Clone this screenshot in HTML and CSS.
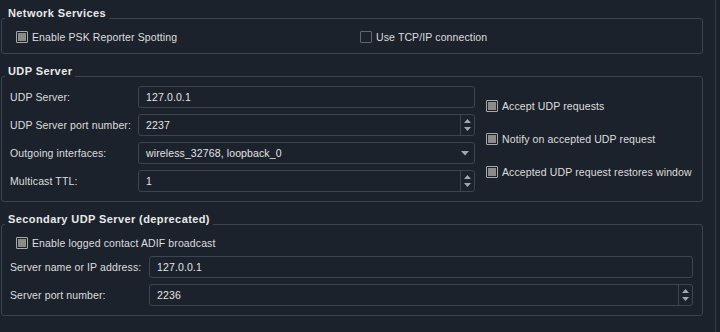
FILE: index.html
```html
<!DOCTYPE html>
<html lang="en">
<head>
    <meta charset="UTF-8">
    <title>Reporting settings</title>
    <link rel="stylesheet" href="styles.css">
</head>
<body>
    <div class="page">

        <!-- Network Services -->
        <section class="group">
            <div class="group-title">Network Services</div>
            <div class="frame frame-network">
                <label class="check"><span class="box is-on"></span>Enable PSK Reporter Spotting</label>
                <label class="check"><span class="box"></span>Use TCP/IP connection</label>
            </div>
        </section>

        <!-- UDP Server -->
        <section class="group">
            <div class="group-title">UDP Server</div>
            <div class="frame frame-udp">
                <div class="form form-udp">
                    <span class="label">UDP Server:</span>
                    <div class="field"><span class="value">127.0.0.1</span></div>

                    <span class="label">UDP Server port number:</span>
                    <div class="field spin">
                        <span class="value">2237</span>
                        <span class="spin-btns">
                            <svg width="9" height="16" viewBox="0 0 9 16"><polygon points="1,6 8,6 4.5,2" /><polygon points="1,10 8,10 4.5,14" /></svg>
                        </span>
                    </div>

                    <span class="label">Outgoing interfaces:</span>
                    <div class="field combo">
                        <span class="value">wireless_32768, loopback_0</span>
                        <svg class="combo-arrow" width="8" height="5" viewBox="0 0 8 5"><polygon points="0,0 8,0 4,4.5" /></svg>
                    </div>

                    <span class="label">Multicast TTL:</span>
                    <div class="field spin">
                        <span class="value">1</span>
                        <span class="spin-btns">
                            <svg width="9" height="16" viewBox="0 0 9 16"><polygon points="1,6 8,6 4.5,2" /><polygon points="1,10 8,10 4.5,14" /></svg>
                        </span>
                    </div>
                </div>
                <div class="options">
                    <label class="check"><span class="box is-on"></span>Accept UDP requests</label>
                    <label class="check"><span class="box is-on"></span>Notify on accepted UDP request</label>
                    <label class="check"><span class="box is-on"></span>Accepted UDP request restores window</label>
                </div>
            </div>
        </section>

        <!-- Secondary UDP Server -->
        <section class="group">
            <div class="group-title">Secondary UDP Server (deprecated)</div>
            <div class="frame frame-secondary">
                <label class="check check-indent"><span class="box is-on"></span>Enable logged contact ADIF broadcast</label>
                <div class="form form-secondary">
                    <span class="label">Server name or IP address:</span>
                    <div class="field"><span class="value">127.0.0.1</span></div>

                    <span class="label">Server port number:</span>
                    <div class="field spin">
                        <span class="value">2236</span>
                        <span class="spin-btns">
                            <svg width="9" height="16" viewBox="0 0 9 16"><polygon points="1,6 8,6 4.5,2" /><polygon points="1,10 8,10 4.5,14" /></svg>
                        </span>
                    </div>
                </div>
            </div>
        </section>

    </div>
</body>
</html>
```

FILE: styles.css
```css
body {
    margin: 0;
    background: #1b222c;
    font-family: "Liberation Sans", Arial, sans-serif;
    font-size: 10.5px;
    letter-spacing: 0.12px;
    color: #dedede;
}
.page {
    box-sizing: border-box;
    width: 716px;
    height: 332px;
    padding: 7px 0 0 1px;
    border-right: 1px solid #333d49;
}

/* group boxes */
.group + .group {
    margin-top: 11px;
}
.group-title {
    position: relative;
    width: fit-content;
    height: 13px;
    line-height: 13px;
    margin: 0 0 -2px 4px;
    padding: 0 3px;
    background: #1b222c;
    font-size: 11px;
    font-weight: bold;
    letter-spacing: 0.4px;
    color: #e9e9e9;
}
.frame {
    box-sizing: border-box;
    width: 702px;
    border: 1px solid #3a4551;
    border-radius: 3px;
}
.frame-network {
    height: 36px;
    padding: 12px 0 0 14px;
    display: grid;
    grid-template-columns: 344px 1fr;
    align-items: start;
}
.frame-udp {
    display: flex;
    gap: 11px;
    padding: 9px 9px 9px 8px;
}
.frame-secondary {
    padding: 12px 9px 9px 8px;
}

/* checkboxes */
.check {
    display: flex;
    align-items: center;
    gap: 4px;
    height: 12px;
    line-height: 12px;
    white-space: nowrap;
}
.check-indent {
    padding-left: 6px;
}
.box {
    box-sizing: border-box;
    width: 12px;
    height: 12px;
    flex: none;
    border: 1px solid #60666e;
    border-radius: 1px;
}
.box.is-on {
    border-color: #a9a9a9;
    background: #8b8b8b;
    box-shadow: inset 0 0 0 1px #1b222c;
}

/* form rows */
.form {
    display: grid;
    grid-auto-rows: 22px;
    row-gap: 6px;
    align-items: center;
}
.form-udp {
    grid-template-columns: 128px 337px;
}
.form-secondary {
    grid-template-columns: 139px 544px;
    margin-top: 7px;
}
.label {
    white-space: nowrap;
}
.field {
    box-sizing: border-box;
    height: 22px;
    display: flex;
    align-items: center;
    padding-left: 7px;
    border: 1px solid #3b4652;
    border-radius: 3px;
    color: #e4e4e4;
}
.value {
    flex: 1;
}
.spin-btns {
    width: 13px;
    height: 100%;
    display: flex;
    align-items: center;
    justify-content: center;
    border-left: 1px solid #3b4652;
}
.spin-btns polygon,
.combo-arrow polygon {
    fill: #a2a7ae;
}
.combo-arrow {
    margin-right: 5px;
}

.options {
    display: flex;
    flex-direction: column;
    justify-content: center;
    gap: 21px;
}
```
